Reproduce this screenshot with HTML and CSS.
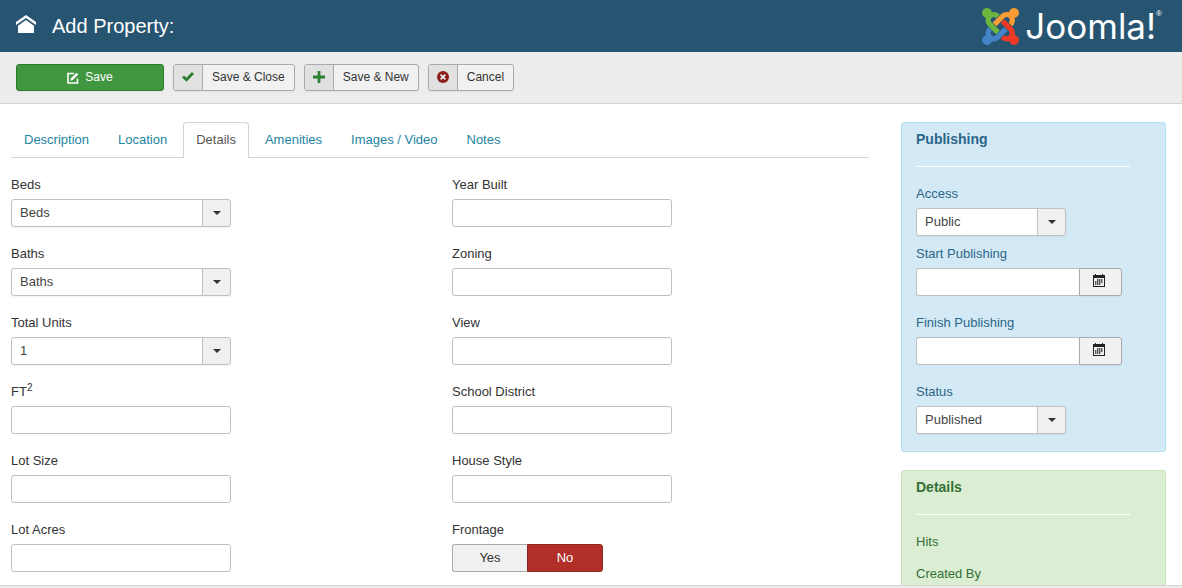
FILE: index.html
```html
<!DOCTYPE html>
<html lang="en">
<head>
<meta charset="utf-8">
<title>Add Property</title>
<link rel="stylesheet" href="styles.css">
</head>
<body>
<header class="header">
  <a class="home" href="#" aria-label="Home">
    <svg width="20" height="18" viewBox="0 0 20 18" fill="#fff"><path d="M10 0 20 7v3L10 3 0 10V7z"/><path d="M10 5 18 10.700V18H2v-7.300z"/></svg>
  </a>
  <h1 class="title">Add Property:</h1>
  <div class="brand">
    <svg width="37" height="37" viewBox="0 32 448 448" aria-hidden="true">
      <path fill="#6cb63f" d="M.6 92.1C.6 58.8 27.4 32 60.4 32c30 0 54.500 21.900 59.200 50.200 32.600-7.600 67.100.6 96.500 30l-44.300 44.300c-20.500-20.500-42.600-16.300-55.400-3.500-14.300 14.300-14.300 37.900 0 52.200l99.500 99.500-44 44.300c-87.700-87.200-49.700-49.700-99.800-99.700-26.800-26.500-35-64.800-24.800-98.900C20.400 144.600.6 120.700.6 92.100z"/>
      <path fill="#f89c33" d="M130.100 208.500l44.300 44.300c10-10 89.700-89.700 99.700-99.800 14.300-14.300 37.600-14.300 51.900 0 12.800 12.800 17 35-3.500 55.400l44 44.300c31.200-31.200 38.500-67.600 28.900-101.200 29.200-4.100 51.900-29.200 51.900-59.500 0-33.200-26.800-60.100-59.800-60.100-30.300 0-55.400 22.500-59.500 51.600-33.800-9.900-71.700-1.500-98.300 25.100-18.300 19.100-71.100 71.500-99.600 99.900z"/>
      <path fill="#ee3a24" d="M396.400 360.700c8.200-32.700-.9-68.500-26.300-93.900-11.800-12.200 5 4.700-99.500-99.700l-44.300 44.300 99.700 99.700c14.300 14.300 14.300 37.600 0 51.900-12.800 12.800-35 17-55.400-3.500l-44 44.300c27.600 30.200 68 38.800 102.700 28 5.500 27.400 29.700 48.100 58.900 48.100 33 0 59.800-26.800 59.800-60.100 0-30.200-22.500-55-51.600-59.100z"/>
      <path fill="#4384c7" d="M312.100 307.600l-44-44.300c-87 86.400-50.400 50.400-99.700 99.800-14.300 14.300-37.600 14.300-51.900 0-13.100-13.400-16.900-35.300 3.200-55.400l-44-44.300c-30.200 30.200-38 65.200-29.500 98.300-26.700 6-46.200 29.900-46.200 58.200C0 453.200 26.800 480 59.800 480c28.600 0 52.500-19.800 58.600-46.700 32.700 8.200 68.500-.6 94.200-26 32.100-32 12.200-12.400 99.500-99.700z"/>
    </svg>
    <span class="brand-name">Joomla!</span><span class="reg">®</span>
  </div>
</header>

<div class="toolbar">
  <button class="btn save" type="button"><svg width="12" height="12" viewBox="0 0 12 12"><path d="M7 1.500H1v9.500h9.500V6.500" fill="none" stroke="#fff" stroke-width="1.600"/><path d="M3.500 8.700 4 6.300 9.500.8 11.300 2.600 5.900 8.100z" fill="#fff"/></svg>Save</button>
  <button class="btn split" type="button"><span class="btn-icon"><svg width="12" height="12" viewBox="0 0 12 12"><path d="M1 5.500l3.500 3.300L11 2" fill="none" stroke="#2f7d2f" stroke-width="2.800"/></svg></span><span class="btn-text">Save &amp; Close</span></button>
  <button class="btn split" type="button"><span class="btn-icon"><svg width="12" height="12" viewBox="0 0 12 12"><path d="M6 0v12M0 6h12" fill="none" stroke="#2f7d2f" stroke-width="2.800"/></svg></span><span class="btn-text">Save &amp; New</span></button>
  <button class="btn split" type="button"><span class="btn-icon"><svg width="12" height="12" viewBox="0 0 12 12"><circle cx="6" cy="6" r="6" fill="#8c1f1c"/><path d="M3.600 3.600l4.800 4.800M8.400 3.600l-4.800 4.800" stroke="#eee" stroke-width="1.700"/></svg></span><span class="btn-text">Cancel</span></button>
</div>

<main class="content">
  <section class="editor">
    <nav class="tabs">
      <a class="tab" href="#">Description</a>
      <a class="tab" href="#">Location</a>
      <a class="tab active" href="#" aria-current="page">Details</a>
      <a class="tab" href="#">Amenities</a>
      <a class="tab" href="#">Images / Video</a>
      <a class="tab" href="#">Notes</a>
    </nav>
    <form class="columns">
      <div class="column">
        <div class="field"><label for="beds">Beds</label><div class="select"><select id="beds"><option>Beds</option></select></div></div>
        <div class="field"><label for="baths">Baths</label><div class="select"><select id="baths"><option>Baths</option></select></div></div>
        <div class="field"><label for="units">Total Units</label><div class="select"><select id="units"><option>1</option></select></div></div>
        <div class="field"><label for="ft">FT<sup>2</sup></label><input class="text" id="ft" type="text"></div>
        <div class="field"><label for="lot">Lot Size</label><input class="text" id="lot" type="text"></div>
        <div class="field"><label for="acres">Lot Acres</label><input class="text" id="acres" type="text"></div>
      </div>
      <div class="column">
        <div class="field"><label for="year">Year Built</label><input class="text" id="year" type="text"></div>
        <div class="field"><label for="zoning">Zoning</label><input class="text" id="zoning" type="text"></div>
        <div class="field"><label for="view">View</label><input class="text" id="view" type="text"></div>
        <div class="field"><label for="school">School District</label><input class="text" id="school" type="text"></div>
        <div class="field"><label for="style">House Style</label><input class="text" id="style" type="text"></div>
        <div class="field" role="radiogroup" aria-labelledby="frontage">
          <span class="label" id="frontage">Frontage</span>
          <div class="toggle">
            <input type="radio" name="frontage" id="yes"><label class="yes" for="yes">Yes</label>
            <input type="radio" name="frontage" id="no" checked><label class="no" for="no">No</label>
          </div>
        </div>
      </div>
    </form>
  </section>

  <aside class="sidebar">
    <section class="panel info">
      <h2>Publishing</h2>
      <hr>
      <div class="field compact"><label for="access">Access</label><div class="select small"><select id="access"><option>Public</option></select></div></div>
      <div class="field"><label for="start">Start Publishing</label>
        <div class="date"><input class="text" id="start" type="text"><button type="button" aria-label="Choose start date"><svg width="12" height="13" viewBox="0 0 12 13"><path d="M0 1h2V0h1v1h6V0h1v1h2v12H0zM1 4v8h10V4z" fill="#222" fill-rule="evenodd"/><path d="M4 6h6M2 8h8M2 10h6" stroke="#222" stroke-width="1.300" stroke-dasharray="1.400 .6"/></svg></button></div></div>
      <div class="field"><label for="finish">Finish Publishing</label>
        <div class="date"><input class="text" id="finish" type="text"><button type="button" aria-label="Choose finish date"><svg width="12" height="13" viewBox="0 0 12 13"><path d="M0 1h2V0h1v1h6V0h1v1h2v12H0zM1 4v8h10V4z" fill="#222" fill-rule="evenodd"/><path d="M4 6h6M2 8h8M2 10h6" stroke="#222" stroke-width="1.300" stroke-dasharray="1.400 .6"/></svg></button></div></div>
      <div class="field compact"><label for="status">Status</label><div class="select small"><select id="status"><option>Published</option></select></div></div>
    </section>
    <section class="panel success">
      <h2>Details</h2>
      <hr>
      <p>Hits</p>
      <p>Created By</p>
    </section>
  </aside>
</main>
<footer class="status-bar"></footer>
</body>
</html>
```
FILE: styles.css
```css
* { box-sizing: border-box; }
body {
  margin: 0;
  height: 100vh;
  display: flex;
  flex-direction: column;
  overflow: hidden;
  background: #fff;
  color: #333;
  font: 13px/18px "Liberation Sans", Arial, sans-serif;
}
button, input, select { font: inherit; color: inherit; margin: 0; }
svg { display: block; flex: none; }

.header {
  flex: none;
  display: flex;
  align-items: center;
  height: 52px;
  padding: 0 20px 0 16px;
  background: #275571;
  color: #fff;
}
.home { padding-bottom: 4px; }
.title { margin: 0 auto 0 16px; font-size: 20px; font-weight: 400; line-height: 24px; }
.brand { display: flex; align-items: center; }
.brand-name {
  margin-left: 6px;
  font: 400 35px/40px Inter, "DejaVu Sans", sans-serif;
}
.reg { align-self: flex-start; font-size: 8px; line-height: 16px; }

.toolbar {
  flex: none;
  display: flex;
  gap: 9px;
  padding: 12px 16px;
  background: #ededed;
  border-bottom: 1px solid #d4d4d4;
}
.btn {
  display: flex;
  align-items: center;
  height: 27px;
  padding: 0;
  border: 1px solid #aaa;
  border-radius: 3px;
  background: #f1f1f1;
  box-shadow: 0 1px 2px rgba(0, 0, 0, .05);
  font-size: 12px;
  line-height: 25px;
  overflow: hidden;
}
.save {
  width: 148px;
  justify-content: center;
  gap: 6px;
  border-color: #2b7c2b;
  background: #409740;
  color: #fff;
}
.btn-icon {
  display: flex;
  align-items: center;
  justify-content: center;
  width: 29px;
  height: 25px;
  padding-bottom: 1px;
  background: #e1e1e1;
  border-right: 1px solid #aaa;
}
.btn-text { padding: 0 9px; }

.content {
  flex: 1;
  min-height: 0;
  display: flex;
  align-items: flex-start;
  gap: 32px;
  padding: 18px 16px 0 11px;
  overflow: hidden;
}
.editor { flex: 1; min-width: 0; }
.tabs { display: flex; gap: 3px; border-bottom: 1px solid #d4d4d4; }
.tab {
  padding: 8px 12px;
  margin-bottom: -1px;
  border: 1px solid transparent;
  border-bottom: 0;
  border-radius: 4px 4px 0 0;
  color: #2384a2;
  text-decoration: none;
}
.tab.active { padding-bottom: 9px; border-color: #d4d4d4; background: #fff; color: #555; }
.columns { display: grid; grid-template-columns: 1fr 1fr; gap: 24px; padding-top: 18px; }
.field { margin-bottom: 18px; }
.compact { margin-bottom: 9px; }
.field > label, .label { display: block; height: 18px; margin-bottom: 5px; }
sup { font-size: 10px; line-height: 0; vertical-align: 5px; }
.text {
  display: block;
  width: 220px;
  height: 28px;
  padding: 4px 6px;
  border: 1px solid #bfbfbf;
  border-radius: 3px;
  background: #fff;
}
.select { position: relative; width: 220px; }
.select select {
  display: block;
  appearance: none;
  width: 100%;
  height: 28px;
  padding: 0 36px 0 8px;
  border: 1px solid #c0c0c0;
  border-radius: 3px;
  background: linear-gradient(#c0c0c0, #c0c0c0) right 27px top / 1px 100% no-repeat, linear-gradient(#f0f0f0, #f0f0f0) right / 27px 100% no-repeat #fff;
  box-shadow: 0 1px 2px rgba(0, 0, 0, .06);
  color: #444;
}
.select::after {
  content: "";
  position: absolute;
  right: 10px;
  top: 12px;
  border: 4px solid transparent;
  border-top-color: #333;
  border-bottom: 0;
  pointer-events: none;
}
.small { width: 150px; }

.toggle { display: flex; width: 151px; }
.toggle input { position: absolute; opacity: 0; }
.toggle label { flex: 1; height: 28px; border: 1px solid #aaa; line-height: 26px; text-align: center; background: #f1f1f1; }
.toggle .yes { border-right: 0; border-radius: 3px 0 0 3px; }
.toggle .no { border-color: #8f2420; border-radius: 0 3px 3px 0; background: #b22e28; color: #fff; }

.sidebar { flex: none; width: 265px; }
.panel { margin-bottom: 18px; padding: 7px 35px 8px 14px; border: 1px solid; border-radius: 3px; }
.info { background: #d4e9f6; border-color: #b2e2ec; color: #2c6687; }
.success { background: #dbedd3; border-color: #c9e4ba; color: #347136; }
.panel h2 { margin: 0; font-size: 14px; line-height: 18px; }
.panel hr { height: 1px; margin: 18px 0; border: 0; background: #fff; }
.panel p { margin: 0 0 14px; }
.date { display: flex; width: 206px; }
.date .text { flex: 1; min-width: 0; border-right: 0; border-radius: 3px 0 0 3px; }
.date button {
  display: flex;
  align-items: flex-start;
  justify-content: center;
  width: 43px;
  height: 28px;
  padding: 5px 4px 0 0;
  border: 1px solid #aaa;
  border-radius: 0 3px 3px 0;
  background: #f1f1f1;
  box-shadow: 0 1px 2px rgba(0, 0, 0, .06);
}

.status-bar { flex: none; height: 3px; background: #ebebeb; border-top: 1px solid #d4d4d4; }
```
